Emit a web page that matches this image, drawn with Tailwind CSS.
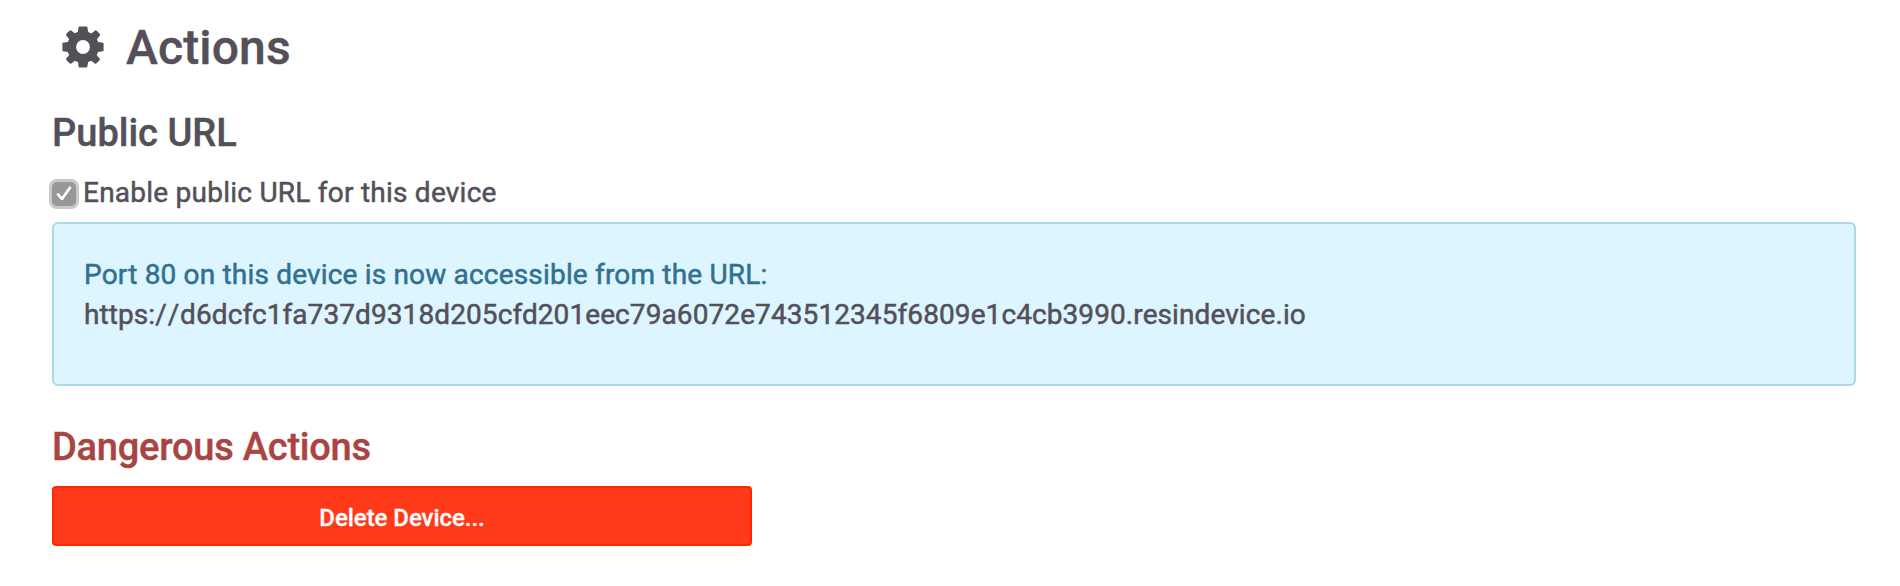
<!DOCTYPE html>
<html lang="en">
<head>
<meta charset="utf-8">
<title>Actions</title>
<script src="https://cdn.jsdelivr.net/npm/@tailwindcss/browser@4"></script>
</head>
<body class="bg-white font-['Roboto',sans-serif] text-[28px] leading-[40px] text-[#53505a] antialiased">
<main class="flex flex-col pt-[22px] pl-[52px] pr-[44px]">
  <h1 class="flex h-[52px] items-center pl-[10px] text-[48px] leading-[52px] font-medium tracking-[0.15px] [-webkit-text-stroke:0.4px_currentColor]">
    <svg class="mr-[22px] mb-[2px] size-[42px] shrink-0" viewBox="-21 -21 42 42" fill="currentColor" aria-hidden="true">
      <path fill-rule="evenodd" d="M-3.6-20.5H3.6Q4.3-20.5 4.4-19.8L5.2-14.9Q7-14.3 8.3-13.5L12.2-16.5Q12.8-16.9 13.4-16.4Q15.4-14.7 17-12.7Q17.3-12.2 16.9-11.6L13.9-7.8Q14.7-6.4 15.1-4.9L19.9-4.2Q20.6-4 20.6-3.4V3.5Q20.6 4.2 19.9 4.3L15 5.1Q14.5 6.7 13.8 8L16.7 11.8Q17.1 12.4 16.7 12.9Q14.7 15.4 12.9 16.7Q12.4 16.9 11.9 16.6L8.2 13.7Q6.7 14.5 5.1 15L4.3 19.8Q4.1 20.5 3.4 20.5H-3.5Q-4.2 20.5-4.3 19.8L-5.1 15Q-6.7 14.5-8.1 13.7L-11.8 16.6Q-12.4 17-13 16.6Q-15.3 14.7-16.8 12.8Q-17.2 12.3-16.8 11.7L-13.9 7.9Q-14.7 6.5-15.2 4.9L-20 4.2Q-20.6 4-20.6 3.4V-3.5Q-20.6-4.1-20-4.3L-15.1-5.1Q-14.6-6.6-13.9-8L-16.8-11.8Q-17.2-12.3-16.8-12.9Q-14.9-15.2-12.9-16.7Q-12.4-16.9-11.9-16.6L-8.2-13.7Q-6.7-14.5-5.2-15L-4.4-19.8Q-4.2-20.5-3.6-20.5ZM0-6.9A6.9 6.9 0 1 0 0 6.9A6.9 6.9 0 1 0 0-6.9Z"/>
    </svg>
    <span>Actions</span>
  </h1>
  <h2 class="mt-[38px] text-[38px] leading-[42px] font-medium [-webkit-text-stroke:0.4px_currentColor]">Public URL</h2>
  <label class="mt-[18px] -ml-[3px] flex h-[40px] items-center">
    <svg class="mt-[4px] mr-[4px] size-[30px] shrink-0" viewBox="0 0 30 30" aria-hidden="true">
      <rect width="30" height="30" rx="8" fill="#c9c8ca"/>
      <rect x="3" y="3" width="24" height="24" rx="5" fill="#98979a"/>
      <path d="M9 16.5L13 21L21 9.5" fill="none" stroke="#77767a" stroke-opacity=".5" stroke-width="3" stroke-linecap="round" stroke-linejoin="round"/>
      <path d="M9 15.5L13 20L21 8.8" fill="none" stroke="#fff" stroke-width="2.8" stroke-linecap="round" stroke-linejoin="round"/>
    </svg>
    <span class="pt-[2px] tracking-[0.24px] [-webkit-text-stroke:0.5px_currentColor]">Enable public URL for this device</span>
  </label>
  <section class="mt-[10px] h-[164px] rounded-[6px] border-2 border-[#add8e6] bg-[#dcf5ff] px-[30px] pt-[31px] [-webkit-text-stroke:0.5px_currentColor]">
    <p class="tracking-[0.18px] text-[#31708f]">Port 80 on this device is now accessible from the URL:</p>
    <p class="tracking-[0.09px]">https:<span class="tracking-[0.9px]">/</span><span class="tracking-[0.8px]">/</span>d6dcfc1fa737d9318d205cfd201eec79a6072e743512345f6809e1c4cb3990.resindevice.io</p>
  </section>
  <h2 class="mt-[40px] text-[38px] leading-[42px] font-medium tracking-[-0.22px] text-[#a94442] [-webkit-text-stroke:0.4px_currentColor]">Dangerous Actions</h2>
  <button type="button" class="mt-[18px] flex h-[60px] w-[700px] items-center justify-center rounded-[4px] border-2 border-[#ff2600] bg-[#ff3a1a] pt-[3px] text-[24px] leading-[34px] font-medium tracking-[-0.05px] text-white [-webkit-text-stroke:0.3px_currentColor]">Delete Device...</button>
</main>
</body>
</html>
